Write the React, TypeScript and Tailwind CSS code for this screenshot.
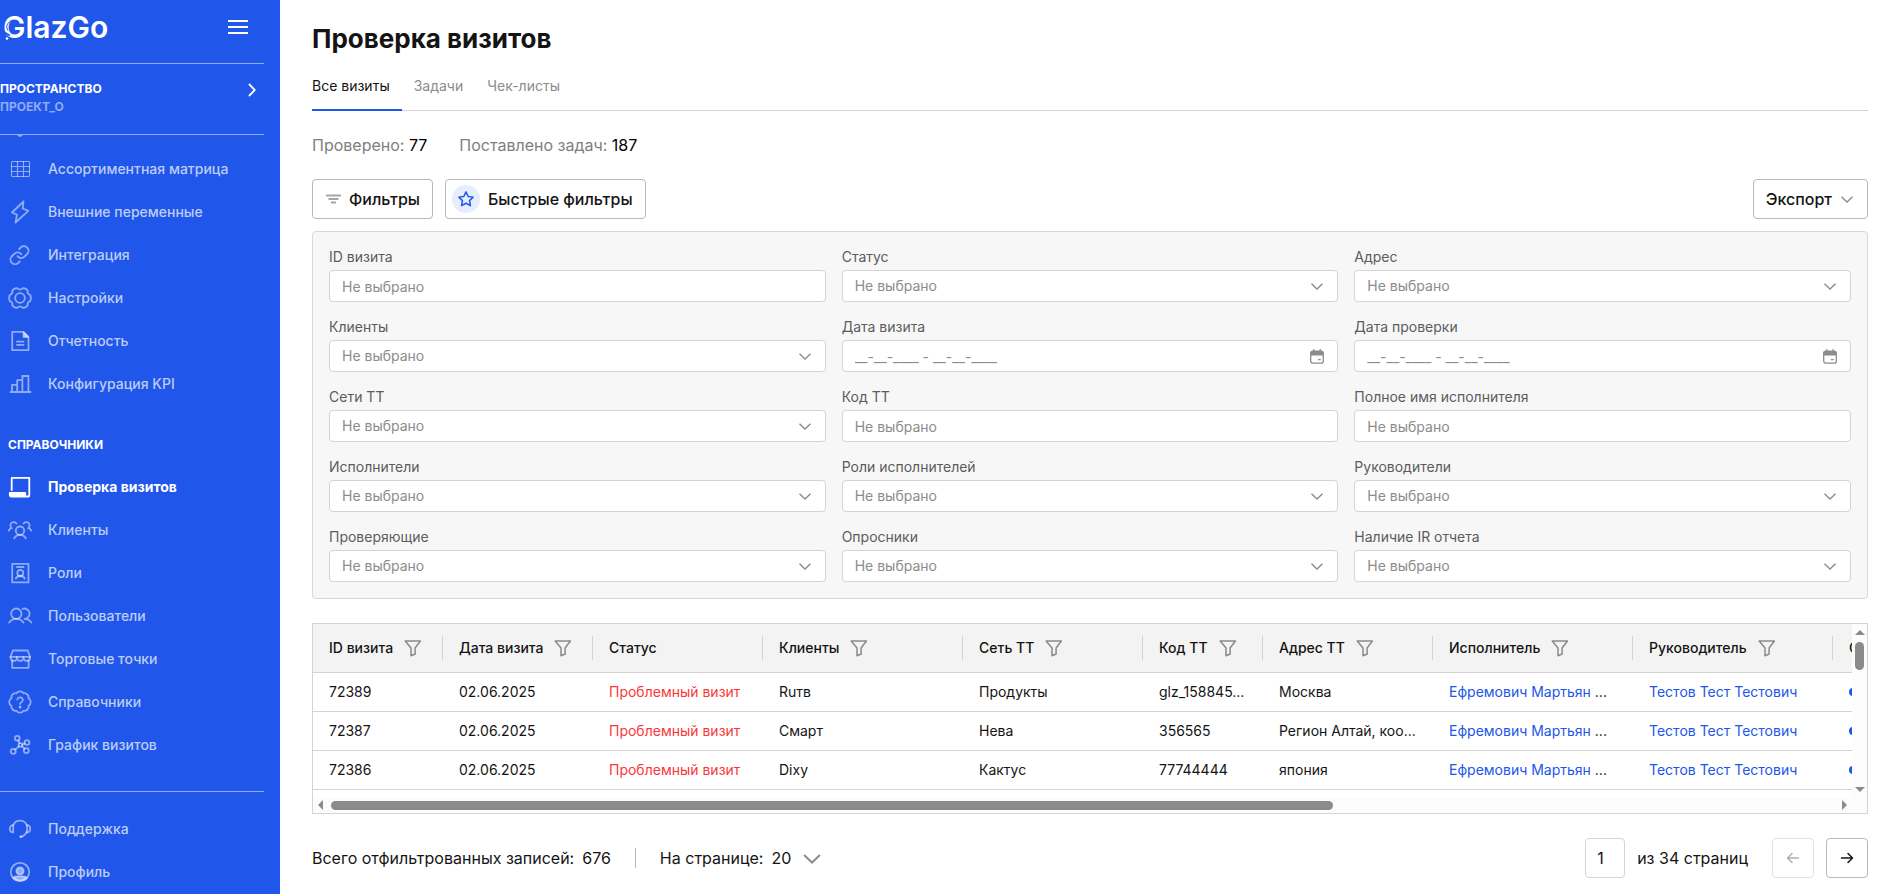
import React, { useState } from "react";

type IconProps = { children: React.ReactNode };

const Icon = ({ children }: IconProps) => (
  <svg
    viewBox="0 0 24 24"
    className="h-6 w-6 shrink-0"
    fill="none"
    stroke="currentColor"
    strokeWidth="1.8"
    strokeLinecap="round"
    strokeLinejoin="round"
    aria-hidden="true"
  >
    {children}
  </svg>
);

const mainItems = [
  {
    label: "Ассортиментная матрица",
    icon: (
      <g strokeWidth="1.1">
        <rect x="3.5" y="4.5" width="18" height="15" rx="1" />
        <path d="M9.5 4.5v15M15.5 4.5v15M3.5 9.5h18M3.5 14.5h18" />
      </g>
    ),
  },
  {
    label: "Внешние переменные",
    icon: <path d="M15.5 1.5 4 12.5l5 2.2-1.5 7.8L20.3 10.8l-5.6-2.3z" />,
  },
  {
    label: "Интеграция",
    icon: (
      <path d="M9.6 13.2a4.600 4.600 0 0 0 6.900.5l2.800-2.800a4.600 4.600 0 0 0-6.500-6.500l-1.600 1.600M13.400 11.200a4.600 4.600 0 0 0-6.900-.5l-2.800 2.800a4.600 4.600 0 0 0 6.500 6.500l1.600-1.600" />
    ),
  },
  {
    label: "Настройки",
    icon: (
      <>
        <path d="M22.2 15.1Q18.9 16 19.8 19.3 17.7 22.4 14.4 21.6 12 19.2 9.6 21.6 6.3 22.4 4.2 19.3 5.1 16 1.8 15.1.5 12 1.8 8.9 5.1 8 4.2 4.7 6.3 1.6 9.6 2.4 12 4.8 14.4 2.4 17.7 1.6 19.8 4.7 18.9 8 22.2 8.9 23.5 12 22.2 15.1z" />
        <circle cx="12" cy="12" r="4.8" />
      </>
    ),
  },
  {
    label: "Отчетность",
    icon: (
      <>
        <path d="M4.2 2.8h11.3l5 5v13.4H4.2z" />
        <path d="M15.500 3.500v4.500h4.500z" fill="currentColor" />
        <path d="M9 12.7h6.5M9 15.8h6.5" />
      </>
    ),
  },
  {
    label: "Конфигурация KPI",
    icon: (
      <path d="M2.5 20h20M4 20v-7.2h5.2V20M9.2 20V8.2h5.2V20M14.4 20V4h6v16" />
    ),
  },
];

const directoryItems = [
  {
    label: "Проверка визитов",
    active: true,
    icon: (
      <>
        <path d="M3.7 15V2.8h17.6V20.5a1 1 0 0 1-1 1h-2" />
        <path
          d="M1.8 17.8h15.4v3.7H3a1.2 1.2 0 0 1-1.2-1.2z"
          fill="currentColor"
        />
      </>
    ),
  },
  {
    label: "Клиенты",
    icon: (
      <>
        <circle cx="12" cy="12.7" r="4.2" />
        <path d="M6.2 20.3c1-2 3-3.4 5.8-3.4s4.8 1.4 5.8 3.4" />
        <path d="M8.4 5.6a3.3 3.3 0 1 0-4.7 4.5c-1.3.4-2.3 1.2-3 2.5M15.6 5.6a3.3 3.3 0 1 1 4.7 4.5c1.3.4 2.3 1.2 3 2.5" />
      </>
    ),
  },
  {
    label: "Роли",
    icon: (
      <>
        <path d="M4.2 2.8h16.3v18.6H4.2zM9 6h6.5" />
        <circle cx="12.3" cy="12" r="3" />
        <path d="M7.8 17.5c.8-1.6 2.4-2.5 4.5-2.5s3.7.9 4.5 2.5" />
      </>
    ),
  },
  {
    label: "Пользователи",
    icon: (
      <>
        <circle cx="8.3" cy="9.7" r="5.2" />
        <path d="M1.2 18.6c1.6-2.4 4.1-3.7 7.1-3.7s5.5 1.3 7.1 3.7" />
        <path d="M14.6 4.8a5.2 5.2 0 1 1 1.9 10.1c2.9 0 5.2 1.3 6.8 3.7" />
      </>
    ),
  },
  {
    label: "Торговые точки",
    icon: (
      <>
        <path d="M4.8 3.5h15L22 9.8H2.5zM4.2 13.5v7.3h16.4v-7.3" />
        <path d="M2.5 9.8v.9a3.2 3.2 0 0 0 6.5 0v-.9 .9a3.2 3.2 0 0 0 6.5 0v-.9 .9a3.2 3.2 0 0 0 6.5 0v-.9" />
      </>
    ),
  },
  {
    label: "Справочники",
    icon: (
      <>
        <path d="M3.4 8.2a4.3 4.3 0 0 1 5-4.9 4.3 4.3 0 0 1 7.2 0 4.3 4.3 0 0 1 5 5 4.3 4.3 0 0 1 0 7.4 4.3 4.3 0 0 1-5 5 4.3 4.3 0 0 1-7.2 0 4.3 4.3 0 0 1-5-5 4.3 4.3 0 0 1 0-7.5z" />
        <path d="M9.3 9.4a2.8 2.8 0 0 1 5.5.8c0 1.9-2.7 2-2.7 3.9" />
        <circle cx="12.1" cy="17" r=".6" fill="currentColor" />
      </>
    ),
  },
  {
    label: "График визитов",
    icon: (
      <>
        <circle cx="9.3" cy="5.2" r="2.4" />
        <circle cx="19" cy="9.5" r="2.4" />
        <circle cx="5.2" cy="18.3" r="2.5" />
        <circle cx="18.3" cy="17.6" r="2.5" />
        <circle cx="12.4" cy="12" r="1.9" />
        <path d="m10.2 7.4 1.4 2.9M14.3 11.5l2.4-1.1M11 13.4l-3.8 3.2M14 13.1l2.5 2.6" />
      </>
    ),
  },
];

const supportItems = [
  {
    label: "Поддержка",
    icon: (
      <>
        <path d="M5.2 8.2c-2.3 0-3.4 1.6-3.4 3.6s1.1 3.6 3.4 3.6zM18.8 15.4c2.3 0 3.4-1.6 3.4-3.6s-1.1-3.6-3.4-3.6" />
        <path d="M5.2 8.4C6.3 5.4 8.8 3.6 12 3.6s6 2 6.9 5c.8 3.4.2 6.6-2 9-1.1 1.3-2.3 2-4.2 2" />
        <path d="M12.6 19.7h.6" strokeWidth="2.6" />
      </>
    ),
  },
  {
    label: "Профиль",
    icon: (
      <>
        <circle cx="12" cy="12" r="9.2" />
        <circle cx="12" cy="11" r="3.6" fill="currentColor" />
        <path
          d="M5.2 17.6c1.8-1.6 4-1.2 6.8-1.2s5-.4 6.8 1.2a9.2 9.2 0 0 1-13.6 0z"
          fill="currentColor"
        />
      </>
    ),
  },
];

type FilterKind = "text" | "select" | "date";

const filters: { label: string; kind: FilterKind }[] = [
  { label: "ID визита", kind: "text" },
  { label: "Статус", kind: "select" },
  { label: "Адрес", kind: "select" },
  { label: "Клиенты", kind: "select" },
  { label: "Дата визита", kind: "date" },
  { label: "Дата проверки", kind: "date" },
  { label: "Сети ТТ", kind: "select" },
  { label: "Код ТТ", kind: "text" },
  { label: "Полное имя исполнителя", kind: "text" },
  { label: "Исполнители", kind: "select" },
  { label: "Роли исполнителей", kind: "select" },
  { label: "Руководители", kind: "select" },
  { label: "Проверяющие", kind: "select" },
  { label: "Опросники", kind: "select" },
  { label: "Наличие IR отчета", kind: "select" },
];

const columns = [
  { title: "ID визита", filter: true, width: "w-[130px]" },
  { title: "Дата визита", filter: true, width: "w-[150px]" },
  { title: "Статус", filter: false, width: "w-[170px]" },
  { title: "Клиенты", filter: true, width: "w-[200px]" },
  { title: "Сеть ТТ", filter: true, width: "w-[180px]" },
  { title: "Код ТТ", filter: true, width: "w-[120px]" },
  { title: "Адрес ТТ", filter: true, width: "w-[170px]" },
  { title: "Исполнитель", filter: true, width: "w-[200px]" },
  { title: "Руководитель", filter: true, width: "w-[200px]" },
];

const visits = [
  {
    id: "72389",
    date: "02.06.2025",
    client: "Ruтв",
    chain: "Продукты",
    code: "glz_158845...",
    address: "Москва",
  },
  {
    id: "72387",
    date: "02.06.2025",
    client: "Смарт",
    chain: "Нева",
    code: "356565",
    address: "Регион Алтай, коо...",
  },
  {
    id: "72386",
    date: "02.06.2025",
    client: "Dixy",
    chain: "Кактус",
    code: "77744444",
    address: "япония",
  },
];

const tabs = ["Все визиты", "Задачи", "Чек-листы"];

const Chevron = ({ className }: { className: string }) => (
  <svg
    viewBox="0 0 12 7"
    className={className}
    fill="none"
    stroke="currentColor"
    strokeWidth="1.4"
    aria-hidden="true"
  >
    <path d="M.5.7 6 6 11.5.7" />
  </svg>
);

const Funnel = () => (
  <svg
    viewBox="0 0 18 18"
    className="h-[18px] w-[18px] text-[#8a8a8a]"
    fill="none"
    stroke="currentColor"
    strokeWidth="1.5"
    strokeLinejoin="round"
    aria-hidden="true"
  >
    <path d="M1.2 2h15.2l-5.3 7v6L7 16.7V9z" />
  </svg>
);

const Calendar = () => (
  <svg viewBox="0 0 14 15" className="h-[15px] w-[14px]" aria-hidden="true">
    <rect
      x=".7"
      y="2.2"
      width="12.6"
      height="12"
      rx="2.2"
      fill="none"
      stroke="currentColor"
      strokeWidth="1.3"
    />
    <path
      d="M.7 6.5V4A2 2 0 0 1 2.7 2h8.6a2 2 0 0 1 2 2v2.5z"
      fill="currentColor"
    />
    <path
      d="M3.8.6v2M10.2.6v2M8.4 10.7h1.8"
      stroke="currentColor"
      strokeWidth="1.3"
      strokeLinecap="round"
    />
  </svg>
);

type NavItemProps = {
  label: string;
  icon: React.ReactNode;
  active?: boolean;
};

const NavItem = ({ label, icon, active }: NavItemProps) => (
  <li>
    <a
      href="#"
      className={
        active
          ? "flex h-[43px] items-center gap-4 pl-2 text-sm font-bold text-white"
          : "flex h-[43px] items-center gap-4 pl-2 text-sm font-medium text-white/50"
      }
    >
      <Icon>{icon}</Icon>
      <span className={active ? "text-white" : "text-[#bccdf9]"}>{label}</span>
    </a>
  </li>
);

const Sidebar = () => (
  <aside className="flex h-screen w-[280px] shrink-0 flex-col bg-[#2156ea] pr-4 text-white">
    <div className="flex h-16 items-center justify-between border-b border-white/50 pr-4 pb-2.5">
      <a
        href="#"
        className="relative pl-[3px] text-[30px] leading-9 font-semibold"
      >
        GlazGo
        <svg
          viewBox="0 0 28 28"
          className="absolute top-2 left-0 h-7 w-7"
          fill="none"
          aria-hidden="true"
        >
          <path d="M3 14.5 10 18.5" stroke="#2156ea" strokeWidth="1.6" />
          <path d="M8 13.5A6.5 6.500 0 0 1 17 4.500" stroke="#2156ea" />
          <circle cx="7" cy="21.5" r="1.3" fill="#fff" />
        </svg>
      </a>
      <button type="button" aria-label="Меню">
        <svg
          viewBox="0 0 20 16"
          className="h-4 w-5"
          stroke="currentColor"
          strokeWidth="2"
          aria-hidden="true"
        >
          <path d="M0 2h20M0 8h20M0 14h20" />
        </svg>
      </button>
    </div>

    <button
      type="button"
      className="flex h-[71px] shrink-0 items-center justify-between border-b border-white/50 pr-2 pb-0.5 text-left text-xs font-bold"
    >
      <span className="block">
        <span className="block leading-[18px]">ПРОСТРАНСТВО</span>
        <span className="block leading-[18px] text-white/50">ПРОЕКТ_О</span>
      </span>
      <svg
        viewBox="0 0 8 14"
        className="mb-4 h-3.5 w-2"
        fill="none"
        stroke="currentColor"
        strokeWidth="1.8"
        aria-hidden="true"
      >
        <path d="m1 1 5.8 6L1 13" />
      </svg>
    </button>

    <nav className="flex min-h-0 flex-1 flex-col overflow-hidden">
      {/* bottom edge of the item scrolled out of view */}
      <svg
        viewBox="0 0 24 2"
        className="ml-2 h-0.5 w-6 shrink-0 text-white/50"
        aria-hidden="true"
      >
        <path d="M9 0h6l-2 1.7h-2z" fill="currentColor" />
      </svg>
      <ul className="mt-2.5">
        {mainItems.map((item) => (
          <NavItem key={item.label} {...item} />
        ))}
      </ul>
      <h2 className="mt-8 mb-3 pl-2 text-xs leading-4 font-bold">
        СПРАВОЧНИКИ
      </h2>
      <ul>
        {directoryItems.map((item) => (
          <NavItem key={item.label} {...item} />
        ))}
      </ul>
    </nav>

    <ul className="shrink-0 border-t border-white/50 pt-[15px] pb-px">
      {supportItems.map((item) => (
        <NavItem key={item.label} {...item} />
      ))}
    </ul>
  </aside>
);

const fieldClass =
  "block h-8 w-full appearance-none rounded border border-[#d4d4d4] bg-white px-3 text-sm text-[#8c8c8c] placeholder:text-[#8c8c8c] outline-none";

const FilterField = ({
  id,
  label,
  kind,
}: {
  id: string;
  label: string;
  kind: FilterKind;
}) => (
  <div>
    <label
      htmlFor={id}
      className="block pb-1 text-sm leading-[18px] text-[#5c5c5c]"
    >
      {label}
    </label>
    <div className="relative">
      {kind === "select" ? (
        <select id={id} className={fieldClass}>
          <option>Не выбрано</option>
        </select>
      ) : (
        <input
          id={id}
          type="text"
          className={fieldClass}
          placeholder={kind === "date" ? "__-__-____ - __-__-____" : "Не выбрано"}
        />
      )}
      {kind !== "text" && (
        <span className="pointer-events-none absolute inset-y-0 right-[13px] flex w-4 items-center justify-center text-[#8c8c8c]">
          {kind === "select" ? <Chevron className="h-[7px] w-3" /> : <Calendar />}
        </span>
      )}
    </div>
  </div>
);

const VisitsTable = () => (
  <div className="mt-6 border border-[#d4d4d4]">
    <div className="flex">
      <div className="min-w-0 flex-1 overflow-hidden pb-2">
        <table className="w-[1720px] table-fixed border-collapse text-left text-sm">
          <thead className="bg-[#f3f3f3]">
            <tr className="border-b border-[#d4d4d4]">
              {columns.map((col) => (
                <th key={col.title} className={`${col.width} h-12 p-0 font-medium`}>
                  <div className="flex h-6 items-center gap-[11px] border-r border-[#d4d4d4] pl-4">
                    {col.title}
                    {col.filter && (
                      <button type="button" aria-label={`Фильтр: ${col.title}`}>
                        <Funnel />
                      </button>
                    )}
                  </div>
                </th>
              ))}
              <th className="p-0 pl-4 font-medium">С</th>
            </tr>
          </thead>
          <tbody>
            {visits.map((v) => (
              <tr
                key={v.id}
                className="border-b border-[#d4d4d4] whitespace-nowrap [&>td]:h-[39px] [&>td]:p-0 [&>td]:pl-4"
              >
                <td>{v.id}</td>
                <td>{v.date}</td>
                <td className="text-[#fa3838]">Проблемный визит</td>
                <td>{v.client}</td>
                <td>{v.chain}</td>
                <td>{v.code}</td>
                <td>{v.address}</td>
                <td>
                  <a href="#" className="text-[#2156ea]">
                    Ефремович Мартьян
                  </a>{" "}
                  ...
                </td>
                <td>
                  <a href="#" className="text-[#2156ea]">
                    Тестов Тест Тестович
                  </a>
                </td>
                <td>
                  <span className="block h-2 w-2 rounded-full bg-[#2156ea]" />
                </td>
              </tr>
            ))}
          </tbody>
        </table>
      </div>
      <div
        className="flex w-[15px] flex-col items-center bg-[#fcfcfc] pt-1.5 pb-1.5 text-[#8b8b8b]"
        aria-hidden="true"
      >
        <svg viewBox="0 0 10 5" className="h-[5px] w-2.5" fill="currentColor">
          <path d="M5 0l5 5H0z" />
        </svg>
        <span className="mt-[7px] h-7 w-[9px] rounded-full bg-[#8b8b8b]" />
        <svg viewBox="0 0 10 5" className="mt-auto h-[5px] w-2.5" fill="currentColor">
          <path d="M0 0h10L5 5z" />
        </svg>
      </div>
    </div>
    <div
      className="flex h-[15px] items-center bg-[#fcfcfc] pr-5 pl-[5px] text-[#8b8b8b]"
      aria-hidden="true"
    >
      <svg viewBox="0 0 5 10" className="h-2.5 w-[5px]" fill="currentColor">
        <path d="M5 0v10L0 5z" />
      </svg>
      <span className="mx-2 flex flex-1">
        <span className="h-[9px] w-2/3 rounded-full bg-[#8b8b8b]" />
      </span>
      <svg viewBox="0 0 5 10" className="h-2.5 w-[5px]" fill="currentColor">
        <path d="M0 0v10l5-5z" />
      </svg>
    </div>
  </div>
);

const Arrow = ({ className }: { className?: string }) => (
  <svg
    viewBox="0 0 14 12"
    className={`h-3 w-3.5 ${className ?? ""}`}
    fill="none"
    stroke="currentColor"
    strokeWidth="1.5"
    strokeLinecap="round"
    strokeLinejoin="round"
    aria-hidden="true"
  >
    <path d="M1.5 6h11M8 1.5 12.5 6 8 10.5" />
  </svg>
);

const Pagination = () => (
  <footer className="mt-6 flex items-center justify-between pb-4 text-base">
    <div className="flex items-center">
      <span>Всего отфильтрованных записей:</span>
      <span className="ml-2">676</span>
      <span className="mx-6 h-5 w-px bg-[#b8b8b8]" />
      <label htmlFor="page-size">На странице:</label>
      <div className="relative ml-2">
        <select id="page-size" className="w-14 appearance-none outline-none">
          <option>20</option>
        </select>
        <Chevron className="pointer-events-none absolute top-2 right-1.5 h-[10px] w-[18px] text-[#8c8c8c]" />
      </div>
    </div>
    <div className="flex items-center gap-3">
      <input
        type="text"
        aria-label="Страница"
        defaultValue="1"
        className="h-10 w-10 rounded border border-[#d4d4d4] pl-[11px] outline-none"
      />
      <span className="mr-3">из 34 страниц</span>
      <button
        type="button"
        disabled
        aria-label="Назад"
        className="flex h-10 w-[42px] items-center justify-center rounded border border-[#e2e2e2] text-[#b0b0b0]"
      >
        <Arrow className="rotate-180" />
      </button>
      <button
        type="button"
        aria-label="Вперед"
        className="flex h-10 w-[42px] items-center justify-center rounded border border-[#b8b8b8]"
      >
        <Arrow />
      </button>
    </div>
  </footer>
);

export default function App() {
  const [tab, setTab] = useState(tabs[0]);

  return (
    <div className="flex h-screen overflow-hidden bg-white font-['Inter',sans-serif] text-[#141414]">
      <Sidebar />

      <main className="min-w-0 flex-1 pt-[23px] pr-[29px] pl-8">
        <h1 className="text-[26px] leading-8 font-bold">Проверка визитов</h1>

        <div className="mt-[15px] flex gap-3 border-b border-[#d4d4d4]">
          {tabs.map((name) => (
            <button
              key={name}
              type="button"
              onClick={() => setTab(name)}
              className={
                name === tab
                  ? "-mb-px border-b-2 border-[#2156ea] pt-1.5 pr-3 pb-[13px] text-sm"
                  : "-mb-px border-b-2 border-transparent pt-1.5 pr-3 pb-[13px] text-sm text-[#8c8c8c]"
              }
            >
              {name}
            </button>
          ))}
        </div>

        <div className="mt-[22px] flex gap-8 text-base text-[#808080]">
          <p>
            Проверено: <span className="text-black">77</span>
          </p>
          <p>
            Поставлено задач: <span className="text-black">187</span>
          </p>
        </div>

        <div className="mt-[22px] flex items-center gap-3 font-medium">
          <button
            type="button"
            className="flex h-10 items-center gap-2 rounded border border-[#b8b8b8] px-3"
          >
            <svg
              viewBox="0 0 16 10"
              className="h-2.5 w-4 text-[#a6a6a6]"
              stroke="currentColor"
              strokeWidth="1.8"
              aria-hidden="true"
            >
              <path d="M1 1.5h15M3.5 5h10M6 8.5h5" />
            </svg>
            Фильтры
          </button>
          <button
            type="button"
            className="flex h-10 items-center gap-2 rounded border border-[#b8b8b8] pr-3 pl-1.5"
          >
            <span className="flex h-7 w-7 items-center justify-center rounded-full bg-[#e6edfd]">
              <svg
                viewBox="0 0 24 24"
                className="h-[18px] w-[18px] text-[#2156ea]"
                fill="none"
                stroke="currentColor"
                strokeWidth="2"
                strokeLinejoin="round"
                aria-hidden="true"
              >
                <path d="m12 2.5 2.9 6.1 6.6.9-4.8 4.7 1.2 6.7-5.9-3.2-5.9 3.2 1.2-6.7-4.8-4.7 6.6-.9z" />
              </svg>
            </span>
            Быстрые фильтры
          </button>
          <button
            type="button"
            className="ml-auto flex h-10 items-center gap-[9px] rounded border border-[#b8b8b8] pr-3.5 pl-3"
          >
            Экспорт
            <Chevron className="h-[7px] w-3 text-[#8c8c8c]" />
          </button>
        </div>

        <form className="mt-3 grid grid-cols-3 gap-4 rounded border border-[#d9d9d9] bg-[#f7f7f7] p-4">
          {filters.map((f, i) => (
            <FilterField key={f.label} id={`filter-${i}`} {...f} />
          ))}
        </form>

        <VisitsTable />
        <Pagination />
      </main>
    </div>
  );
}
